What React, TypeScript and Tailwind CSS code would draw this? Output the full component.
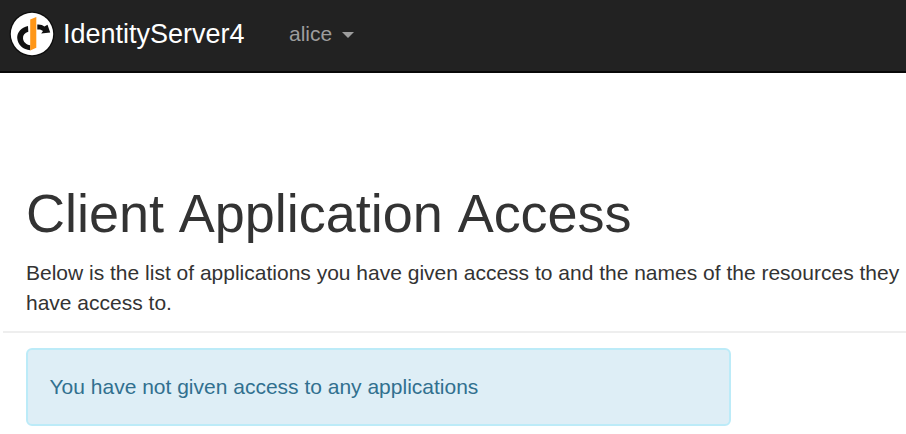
function Logo() {
  return (
    <svg viewBox="0 0 46 46" className="h-[46px] w-[46px] shrink-0" aria-label="IdentityServer4 logo">
      <circle cx="23" cy="23" r="22.5" fill="#0c0c0c" />
      <circle cx="23" cy="23" r="21.2" fill="#fff" />
      <path d="M19 15C12 16.5 8 21.5 8.2 27C8.8 34 14 38.8 21.3 39.2V34.2C17 33.6 14.2 30.8 14 27.2C13.8 24 15.8 21.8 19.3 20.8Z" fill="#111" />
      <path d="M28.3 13.5C31.5 13.3 33.8 14.1 35.4 15.6L38.5 13.8L41.2 21.6L32.2 22.6L34 20.1C32.6 18.8 31 18.3 28.3 18.6Z" fill="#111" />
      <path d="M21.2 8.6L27.3 6V36.7L21.2 39.4Z" fill="#ff9616" />
    </svg>
  );
}

export default function App() {
  return (
    <div className="min-h-[434px] w-full overflow-hidden bg-white font-['Liberation_Sans',Arial,sans-serif] text-[21px] leading-[30px] text-[#333]">
      <nav className="flex h-[73px] items-start border-b-2 border-[#080808] bg-[#222] pt-[11px] pl-[9px]">
        <Logo />
        <a className="mt-[8px] ml-[8px] w-[226px] whitespace-nowrap text-[27px] text-white">IdentityServer4</a>
        <a className="mt-[8px] flex items-center text-[#9d9d9d]">
          <span>alice</span>
          <span className="mt-[1px] ml-[10px] border-x-[6px] border-t-[6px] border-x-transparent border-t-[#9d9d9d]" />
        </a>
      </nav>
      <main className="pt-[111px] pl-[26px]">
        <h1 className="whitespace-nowrap text-[54px] leading-[59px] tracking-[-0.03px] [font-kerning:none]">Client Application Access</h1>
        <p className="mt-[15px] whitespace-nowrap">
          Below is the list of applications you have given access to and the names of the resources they
          <br />
          have access to.
        </p>
        <hr className="mt-[13px] -ml-[23px] border-t-2 border-[#eee]" />
        <div className="mt-[15px] h-[78px] w-[705px] rounded-[6px] border-2 border-[#bcebf8] bg-[#deeef6] px-[21.5px] py-[22px] text-[#31708f]">
          You have not given access to any applications
        </div>
      </main>
    </div>
  );
}
